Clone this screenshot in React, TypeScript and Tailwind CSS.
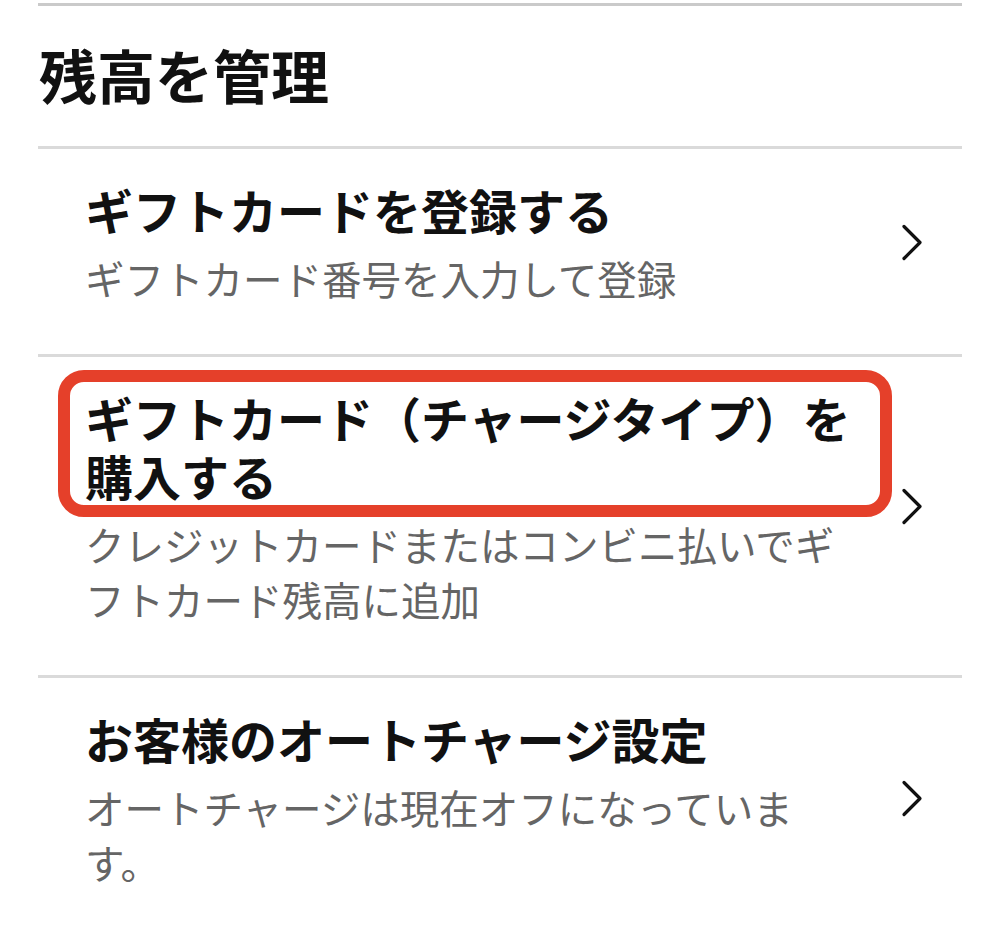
const items = [
  {
    title: "ギフトカードを登録する",
    sub: "ギフトカード番号を入力して登録",
    marked: false,
  },
  {
    title: "ギフトカード（チャージタイプ）を購入する",
    sub: "クレジットカードまたはコンビニ払いでギフトカード残高に追加",
    marked: true,
  },
  {
    title: "お客様のオートチャージ設定",
    sub: "オートチャージは現在オフになっています。",
    marked: false,
  },
];

function Chevron() {
  return (
    <svg width="24" height="40" viewBox="0 0 24 40" className="ml-[35px] shrink-0">
      <path
        d="M4 3.5 L20 19.5 L4 35.5"
        fill="none"
        stroke="#111"
        strokeWidth="3.2"
        strokeLinecap="round"
        strokeLinejoin="round"
      />
    </svg>
  );
}

export default function App() {
  return (
    <div
      className="min-h-[929px] bg-white"
      style={{ fontFamily: '"Noto Sans CJK JP", "Noto Sans", sans-serif' }}
    >
      <div className="mx-[38px] pt-[3px]">
        <div className="h-[3px] bg-[#cacaca]" />
        <div className="flex h-[140px] items-center pb-[4px]">
          <h1 className="pl-[1px] text-[58px] font-bold leading-none text-[#111]">残高を管理</h1>
        </div>

        {items.map((item) => (
          <div
            key={item.title}
            className="relative flex items-center border-t-[3px] border-[#dadada] pt-[31px] pb-[49px] pl-[47px]"
          >
            {item.marked ? (
              <div className="pointer-events-none absolute top-[13px] left-[20px] h-[147px] w-[834px] rounded-[26px] border-[12px] border-[#e5402a]" />
            ) : null}
            <div className="w-[780px]">
              <p className="text-[48px] leading-[58px] font-bold text-[#111]">{item.title}</p>
              <p className="mt-[12px] text-[39.5px] leading-[55px] text-[#656565]">{item.sub}</p>
            </div>
            <Chevron />
          </div>
        ))}
      </div>
    </div>
  );
}
